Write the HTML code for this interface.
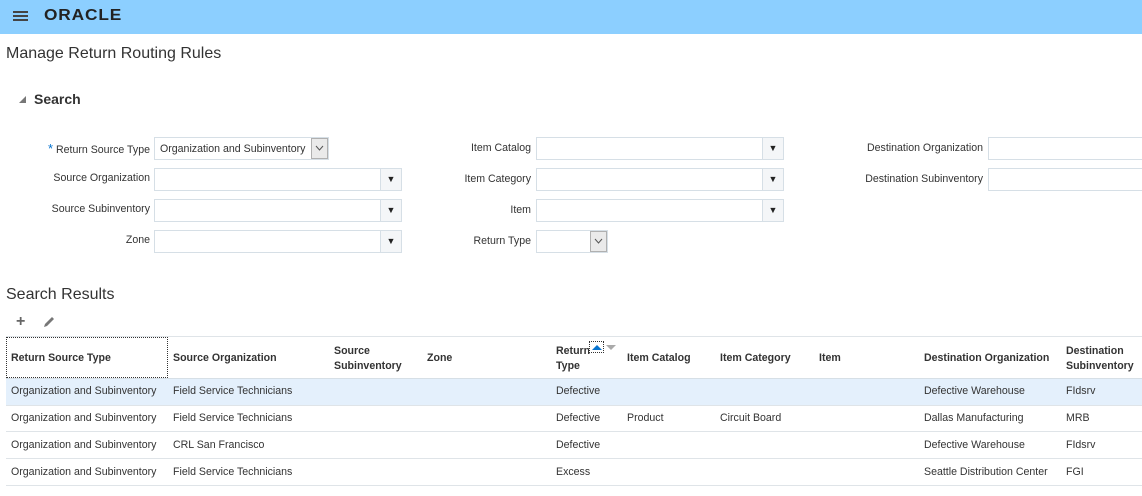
<!DOCTYPE html>
<html><head><style>
*{margin:0;padding:0;box-sizing:border-box}
body{width:1142px;height:496px;overflow:hidden;background:#fff;font-family:"Liberation Sans",Arial,sans-serif;color:#333;position:relative}
.a{position:absolute}
.top{left:0;top:0;width:1142px;height:34px;background:#8ccfff}
.lbl{font-size:10.6px;color:#333;text-align:right;white-space:nowrap}
.in{height:23px;border:1px solid #d6dfe6;background:#fff}
.dd{position:absolute;right:0;top:0;width:21px;height:21px;border-left:1px solid #d6dfe6;background:#f4f6f8;font-size:9px;text-align:center;line-height:21px;color:#222}
.ch{position:absolute;right:0;top:0;width:17px;height:21px;border:1px solid #b0b0b0;background:#eaeaea}
.th{font-size:10.6px;font-weight:bold;color:#333;line-height:15px;white-space:nowrap}
.td{font-size:10.6px;color:#333;white-space:nowrap}
.hl{height:1px;background:#dfe4e8;left:6px;width:1136px}
</style></head><body>
<div class="a top"></div>
<div class="a" style="left:13px;top:11px;width:15px;height:2px;background:#444;box-shadow:0 4px 0 #444,0 8px 0 #444"></div>
<div class="a" style="left:44px;top:7px;font-size:16px;font-weight:bold;letter-spacing:0.8px;color:#222;transform:scaleX(1.08);transform-origin:left">ORACLE</div>
<div class="a" style="left:6px;top:45px;font-size:16px;color:#333">Manage Return Routing Rules</div>
<div class="a" style="left:19px;top:96px;width:0;height:0;border-left:7px solid transparent;border-bottom:7px solid #777"></div>
<div class="a" style="left:34px;top:91px;font-size:14px;font-weight:bold;color:#333">Search</div>

<div class="a lbl" style="right:992px;top:141px"><span style="color:#0572ce;font-size:13px">*</span> Return Source Type</div>
<div class="a in" style="left:154px;top:137px;width:175px;font-size:10.6px;padding:5px 0 0 5px;border-color:#d6dfe6">Organization and Subinventory<div class="ch"><svg width="15" height="19"><path d="M4 7l3.5 4L11 7" stroke="#555" fill="none"/></svg></div></div>
<div class="a lbl" style="right:992px;top:172px">Source Organization</div>
<div class="a in" style="left:154px;top:168px;width:248px"><div class="dd">▼</div></div>
<div class="a lbl" style="right:992px;top:203px">Source Subinventory</div>
<div class="a in" style="left:154px;top:199px;width:248px"><div class="dd">▼</div></div>
<div class="a lbl" style="right:992px;top:234px">Zone</div>
<div class="a in" style="left:154px;top:230px;width:248px"><div class="dd">▼</div></div>

<div class="a lbl" style="right:611px;top:142px">Item Catalog</div>
<div class="a in" style="left:536px;top:137px;width:248px"><div class="dd">▼</div></div>
<div class="a lbl" style="right:611px;top:173px">Item Category</div>
<div class="a in" style="left:536px;top:168px;width:248px"><div class="dd">▼</div></div>
<div class="a lbl" style="right:611px;top:204px">Item</div>
<div class="a in" style="left:536px;top:199px;width:248px"><div class="dd">▼</div></div>
<div class="a lbl" style="right:611px;top:235px">Return Type</div>
<div class="a in" style="left:536px;top:230px;width:72px"><div class="ch"><svg width="15" height="19"><path d="M4 7l3.5 4L11 7" stroke="#555" fill="none"/></svg></div></div>

<div class="a lbl" style="right:159px;top:142px">Destination Organization</div>
<div class="a in" style="left:988px;top:137px;width:160px"></div>
<div class="a lbl" style="right:159px;top:173px">Destination Subinventory</div>
<div class="a in" style="left:988px;top:168px;width:160px"></div>

<div class="a" style="left:6px;top:286px;font-size:16px;color:#333">Search Results</div>
<div class="a" style="left:16px;top:313px;font-size:16px;font-weight:bold;color:#666">+</div>
<svg class="a" style="left:42px;top:315px" width="14" height="14"><path d="M2 12l1-3 7-7 2 2-7 7z" fill="#777"/></svg>

<div class="a hl" style="top:336px"></div>
<div class="a" style="left:6px;top:337px;width:162px;height:41px;border:1px dotted #333"></div>
<div class="a th" style="left:11px;top:351px">Return Source Type</div>
<div class="a th" style="left:173px;top:351px">Source Organization</div>
<div class="a th" style="left:334px;top:344px">Source<br>Subinventory</div>
<div class="a th" style="left:427px;top:351px">Zone</div>
<div class="a th" style="left:556px;top:344px">Return<br>Type</div>
<div class="a" style="left:589px;top:341px;width:15px;height:12px;border:1px dotted #333;background:#fff"></div>
<div class="a" style="left:592px;top:345px;border-left:5px solid transparent;border-right:5px solid transparent;border-bottom:5px solid #0572ce"></div>
<div class="a" style="left:606px;top:345px;border-left:5px solid transparent;border-right:5px solid transparent;border-top:5px solid #aaa"></div>
<div class="a th" style="left:627px;top:351px">Item Catalog</div>
<div class="a th" style="left:720px;top:351px">Item Category</div>
<div class="a th" style="left:819px;top:351px">Item</div>
<div class="a th" style="left:924px;top:351px">Destination Organization</div>
<div class="a th" style="left:1066px;top:344px">Destination<br>Subinventory</div>
<div class="a" style="left:6px;top:378px;width:1136px;height:27px;background:#e4f0fc;border-top:1px solid #d6dfe6"></div>
<div class="a hl" style="top:405px"></div>
<div class="a hl" style="top:431px"></div>
<div class="a hl" style="top:458px"></div>
<div class="a hl" style="top:485px"></div>

<div class="a td" style="left:11px;top:385px">Organization and Subinventory</div>
<div class="a td" style="left:173px;top:385px">Field Service Technicians</div>
<div class="a td" style="left:556px;top:385px">Defective</div>
<div class="a td" style="left:924px;top:385px">Defective Warehouse</div>
<div class="a td" style="left:1066px;top:385px">FIdsrv</div>

<div class="a td" style="left:11px;top:412px">Organization and Subinventory</div>
<div class="a td" style="left:173px;top:412px">Field Service Technicians</div>
<div class="a td" style="left:556px;top:412px">Defective</div>
<div class="a td" style="left:627px;top:412px">Product</div>
<div class="a td" style="left:720px;top:412px">Circuit Board</div>
<div class="a td" style="left:924px;top:412px">Dallas Manufacturing</div>
<div class="a td" style="left:1066px;top:412px">MRB</div>

<div class="a td" style="left:11px;top:439px">Organization and Subinventory</div>
<div class="a td" style="left:173px;top:439px">CRL San Francisco</div>
<div class="a td" style="left:556px;top:439px">Defective</div>
<div class="a td" style="left:924px;top:439px">Defective Warehouse</div>
<div class="a td" style="left:1066px;top:439px">FIdsrv</div>

<div class="a td" style="left:11px;top:466px">Organization and Subinventory</div>
<div class="a td" style="left:173px;top:466px">Field Service Technicians</div>
<div class="a td" style="left:556px;top:466px">Excess</div>
<div class="a td" style="left:924px;top:466px">Seattle Distribution Center</div>
<div class="a td" style="left:1066px;top:466px">FGI</div>
</body></html>
